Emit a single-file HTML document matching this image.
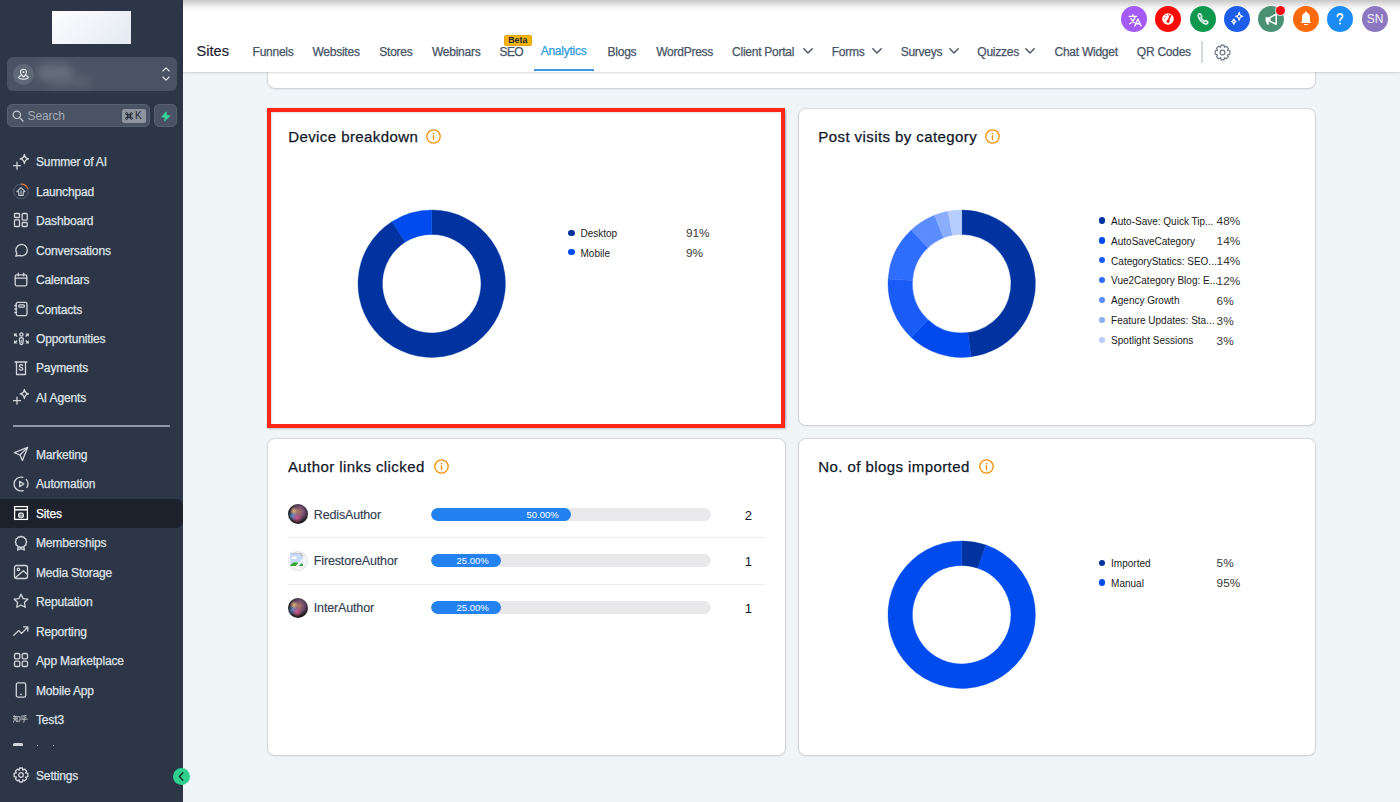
<!DOCTYPE html>
<html><head><meta charset="utf-8">
<style>
*{box-sizing:border-box;margin:0;padding:0}
html,body{width:1400px;height:802px;overflow:hidden;background:#f0f5f8;font-family:"Liberation Sans",sans-serif;position:relative}
.abs{position:absolute}
svg{display:block}
#sb{left:0;top:0;width:183px;height:802px;background:#2d3647}
.logo{left:52px;top:11px;width:79px;height:33px;background:linear-gradient(135deg,#fdfdff 0%,#eef1f7 60%,#e3e8f1 100%)}
.loc{left:7px;top:57px;width:170px;height:34px;border-radius:6px;background:#4a5363}
.loc .av{left:6px;top:7px;width:21px;height:21px;border-radius:50%;background:#5f6876}
.srch{left:6.5px;top:104px;width:143px;height:23px;border-radius:5px;background:#4a5363;border:1px solid #576070}
.srch span{position:absolute;left:20px;top:4px;font-size:12px;color:#a3aab6;letter-spacing:-0.1px}
.kbd{left:114px;top:4px;width:24px;height:14px;border-radius:2.5px;background:#8e95a1;color:#232a36;font-size:10px;line-height:14px;text-align:center;letter-spacing:0.5px}
.bolt{left:154px;top:104px;width:23px;height:23px;border-radius:5px;background:#4a5363;border:1px solid #576070}
.nav{left:0;width:183px;height:29px}
.nav .t{position:absolute;left:36px;top:8.3px;font-size:12px;color:#dfe2e7;letter-spacing:-0.15px;white-space:nowrap;-webkit-text-stroke:0.25px #dfe2e7}
.nav svg{position:absolute;left:13px;top:6px}
.nav.act{background:#1c212c;border-radius:0 7px 7px 0}
.nav.act .t{color:#fff;-webkit-text-stroke:0.25px #fff}
.sep{left:13px;top:425px;width:157px;height:2px;background:#8e96a3}
.collapse{left:173px;top:768px;width:17px;height:17px;border-radius:50%;background:#2fcf8e}
/* header */
#hd{z-index:5;left:183px;top:0;width:1217px;height:72px;background:#fff;box-shadow:0 1px 3px rgba(0,0,0,.09),0 1px 1px rgba(0,0,0,.06)}
#hd .shade{left:0;top:0;width:1217px;height:12px;background:linear-gradient(#c9c9c9 0px,#d3d3d3 2px,#e4e4e4 4.5px,#f3f3f3 7.5px,#fcfcfc 10px,#fff 12px)}
.htitle{left:13.5px;top:43.4px;font-size:14.6px;color:#1b2230;white-space:nowrap;-webkit-text-stroke:0.2px #1b2230}
.ni{top:45.3px;font-size:12px;color:#475467;letter-spacing:-0.25px;white-space:nowrap;-webkit-text-stroke:0.25px #475467}
.ni.on{color:#2d9cdb;-webkit-text-stroke:0.25px #2d9cdb;top:44.2px}
.uline{left:351.3px;top:68.6px;width:60px;height:2px;background:#3a9be0}
.beta{left:320.5px;top:35px;width:28.5px;height:11px;border-radius:3px;background:#f6b40e;box-shadow:inset 0 0 0 0.6px #d99a00;font-size:8.8px;line-height:11.5px;text-align:center;color:#1d2735;font-weight:700}
.chev{top:48px}
.vdiv{left:1018px;top:41px;width:2px;height:22px;background:#d6d9de}
.ci{top:5.5px;width:26px;height:26px;border-radius:50%}
/* cards */
.card{background:#fff;border-radius:7px;box-shadow:0 0 0 1px rgba(16,24,40,.05),0 0 2px 1px rgba(16,24,40,.06),0 1px 3px rgba(16,24,40,.08)}
.ct{position:absolute;left:20.5px;top:19px;font-size:16px;color:#101828;white-space:nowrap}
.info{position:absolute;top:20px}
.leg{position:absolute;font-size:11px;color:#101828;white-space:nowrap}
.leg i{position:absolute;left:-14px;top:3.5px;width:7px;height:7px;border-radius:50%}
.pct{position:absolute;font-size:12px;color:#333;white-space:nowrap}
.zh{position:absolute;left:13px;top:9.5px;font-size:8px;color:#c8ccd3;letter-spacing:-0.5px}
.ctitle{font-size:15px;color:#101828;white-space:nowrap;letter-spacing:0.42px;-webkit-text-stroke:0.25px #101828}
.ldot{width:6.4px;height:6.4px;border-radius:50%}
.ltxt{font-size:10px;color:#1a1a1a;white-space:nowrap}
.lpct{font-size:11.8px;color:#383838;white-space:nowrap}
.avatar{width:20px;height:20px;border-radius:50%;background:radial-gradient(circle at 30% 35%,rgba(240,190,120,.9) 0,rgba(240,190,120,0) 22%),radial-gradient(circle at 45% 70%,rgba(220,90,140,.9) 0,rgba(220,90,140,0) 30%),radial-gradient(circle at 25% 60%,rgba(90,150,220,.9) 0,rgba(90,150,220,0) 28%),radial-gradient(circle at 55% 40%,#b07a6a 0,#6a4a6a 35%,#1a1a1a 62%)}
.avb{width:20px;height:20px;border-radius:50%;background:#f4f5f7;box-shadow:inset 0 0 0 1px #e2e4e8}
.aname{font-size:12.5px;color:#344054;white-space:nowrap;letter-spacing:-0.15px;-webkit-text-stroke:0.15px #344054}
.track{width:279.8px;height:13px;border-radius:7px;background:#e9e9eb;overflow:hidden}
.fill{height:13px;border-radius:7px;background:#2382f0;position:relative}
.fill span{position:absolute;right:12px;top:1px;font-size:9.5px;color:#fff;white-space:nowrap;line-height:11px}
.acnt{width:52px;text-align:right;font-size:13px;color:#101828}
.adiv{left:288px;width:476.6px;height:1px;background:#eaecf0}
.red{left:267px;top:108px;width:518px;height:320px;border:4px solid #fe2718;box-shadow:1px 1px 2px rgba(0,0,0,.22),inset 1px 1px 2px rgba(0,0,0,.12)}
</style></head><body>
<div id="sb" class="abs">
  <div class="abs logo"></div>
  <div class="abs loc"><div class="abs av"><svg width="21" height="21" viewBox="0 0 21 21"><path d="M10.5 5.2A3 3 0 0 0 7.5 8.2C7.5 10.2 10.5 13 10.5 13S13.5 10.2 13.5 8.2A3 3 0 0 0 10.5 5.2Z" fill="none" stroke="#eef0f3" stroke-width="1.1"/><circle cx="10.5" cy="8.2" r="0.9" fill="#eef0f3"/><path d="M8.2 11.6C6.6 12 5.7 12.6 5.7 13.3C5.7 14.4 7.8 15.2 10.5 15.2S15.3 14.4 15.3 13.3C15.3 12.6 14.4 12 12.8 11.6" fill="none" stroke="#eef0f3" stroke-width="1.1"/></svg></div>
   <div class="abs" style="left:30px;top:8px;width:36px;height:15px;border-radius:8px;background:#727984;filter:blur(5px);opacity:.8"></div>
   <div class="abs" style="left:40px;top:18px;width:46px;height:12px;border-radius:6px;background:#636b77;filter:blur(5px);opacity:.6"></div>
   <svg class="abs" style="left:153.5px;top:9px" width="10" height="16" viewBox="0 0 10 16"><path d="M1.8 5L5 1.8L8.2 5M1.8 11L5 14.2L8.2 11" fill="none" stroke="#e5e7eb" stroke-width="1.1" stroke-linecap="round" stroke-linejoin="round"/></svg></div>
  <div class="abs srch"><svg class="abs" style="left:3.5px;top:4px" width="14" height="14" viewBox="0 0 14 14"><circle cx="5.8" cy="5.8" r="3.7" fill="none" stroke="#c4c9d1" stroke-width="1.2"/><path d="M8.6 8.6L12 12" stroke="#c4c9d1" stroke-width="1.3" stroke-linecap="round"/></svg><span>Search</span><div class="abs kbd"><svg class="abs" style="left:3px;top:3.2px" width="8" height="8" viewBox="0 0 8 8"><path fill="none" stroke="#232a36" stroke-width="1" d="M2.7 2.7H5.3V5.3H2.7ZM2.7 2.7V1.9A1.05 1.05 0 1 0 1.9 2.7H6.1A1.05 1.05 0 1 0 5.3 1.9V6.1A1.05 1.05 0 1 0 6.1 5.3H1.9A1.05 1.05 0 1 0 2.7 6.1Z"/></svg><span style="position:absolute;left:13.5px;top:0;font-size:10px;line-height:14px;color:#232a36">K</span></div></div>
  <div class="abs bolt"><svg class="abs" style="left:4.5px;top:4.5px" width="13" height="13" viewBox="0 0 13 13"><path d="M6.1 1.8L1.8 7.1H5.4L4.6 10.9L10 5.6H6.5Z" fill="#36d59a" stroke="#36d59a" stroke-width="0.9" stroke-linejoin="round"/></svg></div>
<div class="abs nav" style="top:147.10px"><svg width="16" height="16" viewBox="0 0 16 16" style="top:6.5px"><path fill="none" stroke="#d2d6dc" stroke-width="1.3" stroke-linecap="round" stroke-linejoin="round" d="M11.4 0.3Q11.9 4.3 15.6 4.9Q11.9 5.5 11.4 9.5Q10.9 5.5 7.2 4.9Q10.9 4.3 11.4 0.3Z"/><path fill="none" stroke="#d2d6dc" stroke-width="1.3" stroke-linecap="round" stroke-linejoin="round" d="M4 8.2V15.2M0.5 11.7H7.5"/></svg><span class="t">Summer of AI</span></div>
<div class="abs nav" style="top:176.54px"><svg width="16" height="16" viewBox="0 0 16 16" style="top:6.5px"><g transform="translate(0 0.4)"><circle cx="8" cy="8" r="7.3" fill="none" stroke="#566071" stroke-width="1"/><path d="M8 0.7A7.3 7.3 0 0 1 14.95 5.75" fill="none" stroke="#d9793a" stroke-width="1.2"/><path fill="none" stroke="#c9cdd4" stroke-width="1.1" stroke-linejoin="round" d="M8 4.3L12 8.3H10.2V12.1H5.8V8.3H4Z"/><path d="M8 6.8V12.1" stroke="#c9cdd4" stroke-width="0.9"/></g></svg><span class="t">Launchpad</span></div>
<div class="abs nav" style="top:205.98px"><svg width="16" height="16" viewBox="0 0 16 16" style="top:6.5px"><rect fill="none" stroke="#d2d6dc" stroke-width="1.3" stroke-linecap="round" stroke-linejoin="round" x="1.5" y="1.5" width="5" height="4" rx="0.8"/><rect fill="none" stroke="#d2d6dc" stroke-width="1.3" stroke-linecap="round" stroke-linejoin="round" x="1.5" y="7.8" width="5" height="6.7" rx="0.8"/><rect fill="none" stroke="#d2d6dc" stroke-width="1.3" stroke-linecap="round" stroke-linejoin="round" x="9.2" y="1.5" width="5" height="6.7" rx="0.8"/><rect fill="none" stroke="#d2d6dc" stroke-width="1.3" stroke-linecap="round" stroke-linejoin="round" x="9.2" y="10.5" width="5" height="4" rx="0.8"/></svg><span class="t">Dashboard</span></div>
<div class="abs nav" style="top:235.42px"><svg width="16" height="16" viewBox="0 0 16 16" style="top:6.5px"><path fill="none" stroke="#d2d6dc" stroke-width="1.3" stroke-linecap="round" stroke-linejoin="round" d="M2.8 14.2L3.8 11.2A5.7 5.7 0 1 1 6.4 13.4Z"/></svg><span class="t">Conversations</span></div>
<div class="abs nav" style="top:264.86px"><svg width="16" height="16" viewBox="0 0 16 16" style="top:6.5px"><rect fill="none" stroke="#d2d6dc" stroke-width="1.3" stroke-linecap="round" stroke-linejoin="round" x="2.2" y="3.8" width="11.6" height="11" rx="1.5"/><path fill="none" stroke="#d2d6dc" stroke-width="1.3" stroke-linecap="round" stroke-linejoin="round" d="M2.2 7.2H13.8M5.3 2.2V4.8M10.7 2.2V4.8"/></svg><span class="t">Calendars</span></div>
<div class="abs nav" style="top:294.30px"><svg width="16" height="16" viewBox="0 0 16 16" style="top:6.5px"><rect fill="none" stroke="#d2d6dc" stroke-width="1.3" stroke-linecap="round" stroke-linejoin="round" x="3.2" y="1.4" width="10.8" height="13.2" rx="1.5"/><rect fill="none" stroke="#d2d6dc" stroke-width="1.3" stroke-linecap="round" stroke-linejoin="round" x="5.8" y="3.8" width="5.6" height="2.4" rx="1"/><path fill="none" stroke="#d2d6dc" stroke-width="1.3" stroke-linecap="round" stroke-linejoin="round" d="M1.8 4.5H3.5M1.8 8H3.5M1.8 11.5H3.5"/></svg><span class="t">Contacts</span></div>
<div class="abs nav" style="top:323.74px"><svg width="16" height="16" viewBox="0 0 16 16" style="top:6.5px"><circle fill="none" stroke="#d2d6dc" stroke-width="1.3" stroke-linecap="round" stroke-linejoin="round" cx="8.4" cy="4.5" r="1.6"/><path fill="none" stroke="#d2d6dc" stroke-width="1.3" stroke-linecap="round" stroke-linejoin="round" stroke-width="1.2" d="M6.4 9.4Q6.4 7.6 8.4 7.6Q10.4 7.6 10.4 9.4L9.7 13.6Q9.5 14.5 8.4 14.5Q7.3 14.5 7.1 13.6Z"/><path d="M8.4 9.6V13" stroke="#d2d6dc" stroke-width="0.8"/><path fill="#d2d6dc" d="M0.8 3.6H4.4L3.3 4.7L4.6 6L3.6 7L2.3 5.7L1.2 6.8ZM16 3.6H12.4L13.5 4.7L12.2 6L13.2 7L14.5 5.7L15.6 6.8ZM0.8 13.4H4.4L3.3 12.3L4.6 11L3.6 10L2.3 11.3L1.2 10.2ZM16 13.4H12.4L13.5 12.3L12.2 11L13.2 10L14.5 11.3L15.6 10.2Z"/></svg><span class="t">Opportunities</span></div>
<div class="abs nav" style="top:353.18px"><svg width="16" height="16" viewBox="0 0 16 16" style="top:6.5px"><path fill="none" stroke="#d2d6dc" stroke-width="1.3" stroke-linecap="round" stroke-linejoin="round" d="M2 2H14M3.5 2V14.5H12.5V2"/><path fill="none" stroke="#d2d6dc" stroke-width="1.3" stroke-linecap="round" stroke-linejoin="round" stroke-width="1.1" d="M9.6 5.6Q9.2 4.6 8 4.6Q6.4 4.6 6.4 5.9Q6.4 7 8 7.3Q9.8 7.6 9.8 8.9Q9.8 10.2 8 10.2Q6.7 10.2 6.3 9.2"/></svg><span class="t">Payments</span></div>
<div class="abs nav" style="top:382.62px"><svg width="16" height="16" viewBox="0 0 16 16" style="top:6.5px"><path fill="none" stroke="#d2d6dc" stroke-width="1.3" stroke-linecap="round" stroke-linejoin="round" d="M11.4 0.3Q11.9 4.3 15.6 4.9Q11.9 5.5 11.4 9.5Q10.9 5.5 7.2 4.9Q10.9 4.3 11.4 0.3Z"/><path fill="none" stroke="#d2d6dc" stroke-width="1.3" stroke-linecap="round" stroke-linejoin="round" d="M4 8.2V15.2M0.5 11.7H7.5"/></svg><span class="t">AI Agents</span></div>
<div class="abs sep"></div>
<div class="abs nav" style="top:439.70px"><svg width="16" height="16" viewBox="0 0 16 16" style="top:6.5px"><path fill="none" stroke="#d2d6dc" stroke-width="1.3" stroke-linecap="round" stroke-linejoin="round" d="M14.6 1.4L1.4 6.6L7 9L9.4 14.6Z"/><path fill="none" stroke="#d2d6dc" stroke-width="1.3" stroke-linecap="round" stroke-linejoin="round" d="M14.6 1.4L7 9"/></svg><span class="t">Marketing</span></div>
<div class="abs nav" style="top:469.14px"><svg width="16" height="16" viewBox="0 0 16 16" style="top:6.5px"><path fill="none" stroke="#d2d6dc" stroke-width="1.3" stroke-linecap="round" stroke-linejoin="round" d="M9.79 1.34A6.9 6.9 0 1 0 10.13 14.56"/><path fill="none" stroke="#d2d6dc" stroke-width="1.3" stroke-linecap="round" stroke-linejoin="round" d="M13.13 3.38A6.9 6.9 0 0 1 13.98 11.45"/><path fill="none" stroke="#d2d6dc" stroke-width="1.3" stroke-linecap="round" stroke-linejoin="round" d="M6.6 5.4L10.9 8L6.6 10.6Z"/></svg><span class="t">Automation</span></div>
<div class="abs nav act" style="top:498.58px"><svg width="16" height="16" viewBox="0 0 16 16" style="top:6.5px"><rect x="1.6" y="1.6" width="12.8" height="12.8" fill="none" stroke="#fff" stroke-width="1.3"/><path d="M1.6 4.8H14.4" stroke="#fff" stroke-width="1.5"/><circle cx="8" cy="10.2" r="3" fill="#f0f0f0"/><path d="M6.2 9.6H9.8M6.2 10.9H9.8M8 7.4V13" stroke="#1c212c" stroke-width="0.5"/></svg><span class="t">Sites</span></div>
<div class="abs nav" style="top:528.02px"><svg width="16" height="16" viewBox="0 0 16 16" style="top:6.5px"><path fill="none" stroke="#d2d6dc" stroke-width="1.3" stroke-linecap="round" stroke-linejoin="round" d="M8 1.2L9.3 2.1L10.9 1.9L11.6 3.4L13.1 4.1L12.9 5.7L13.8 7L12.9 8.3L13.1 9.9L11.6 10.6L10.9 12.1L9.3 11.9L8 12.8L6.7 11.9L5.1 12.1L4.4 10.6L2.9 9.9L3.1 8.3L2.2 7L3.1 5.7L2.9 4.1L4.4 3.4L5.1 1.9L6.7 2.1Z"/><path fill="none" stroke="#d2d6dc" stroke-width="1.3" stroke-linecap="round" stroke-linejoin="round" d="M5.2 12L4.6 15L8 13.6L11.4 15L10.8 12"/></svg><span class="t">Memberships</span></div>
<div class="abs nav" style="top:557.46px"><svg width="16" height="16" viewBox="0 0 16 16" style="top:6.5px"><rect fill="none" stroke="#d2d6dc" stroke-width="1.3" stroke-linecap="round" stroke-linejoin="round" x="1.5" y="1.5" width="13" height="13" rx="2"/><circle fill="none" stroke="#d2d6dc" stroke-width="1.3" stroke-linecap="round" stroke-linejoin="round" cx="5.4" cy="5.4" r="1.2"/><path fill="none" stroke="#d2d6dc" stroke-width="1.3" stroke-linecap="round" stroke-linejoin="round" d="M2 14L10.5 6.8L14.5 10.6"/></svg><span class="t">Media Storage</span></div>
<div class="abs nav" style="top:586.90px"><svg width="16" height="16" viewBox="0 0 16 16" style="top:6.5px"><path fill="none" stroke="#d2d6dc" stroke-width="1.3" stroke-linecap="round" stroke-linejoin="round" d="M8 1.2L10.1 5.6L14.8 6.2L11.4 9.5L12.2 14.3L8 12L3.8 14.3L4.6 9.5L1.2 6.2L5.9 5.6Z"/></svg><span class="t">Reputation</span></div>
<div class="abs nav" style="top:616.34px"><svg width="16" height="16" viewBox="0 0 16 16" style="top:6.5px"><path fill="none" stroke="#d2d6dc" stroke-width="1.3" stroke-linecap="round" stroke-linejoin="round" d="M0.8 12.2L5.6 7.6L8.6 10.4L14.6 4.2M10.6 3.8H14.8V8"/></svg><span class="t">Reporting</span></div>
<div class="abs nav" style="top:645.78px"><svg width="16" height="16" viewBox="0 0 16 16" style="top:6.5px"><rect fill="none" stroke="#d2d6dc" stroke-width="1.3" stroke-linecap="round" stroke-linejoin="round" x="1.5" y="1.5" width="5.3" height="5.3" rx="1.3"/><rect fill="none" stroke="#d2d6dc" stroke-width="1.3" stroke-linecap="round" stroke-linejoin="round" x="9.2" y="1.5" width="5.3" height="5.3" rx="1.3"/><rect fill="none" stroke="#d2d6dc" stroke-width="1.3" stroke-linecap="round" stroke-linejoin="round" x="1.5" y="9.2" width="5.3" height="5.3" rx="1.3"/><rect fill="none" stroke="#d2d6dc" stroke-width="1.3" stroke-linecap="round" stroke-linejoin="round" x="9.2" y="9.2" width="5.3" height="5.3" rx="1.3"/></svg><span class="t">App Marketplace</span></div>
<div class="abs nav" style="top:675.22px"><svg width="16" height="16" viewBox="0 0 16 16" style="top:6.5px"><rect fill="none" stroke="#d2d6dc" stroke-width="1.3" stroke-linecap="round" stroke-linejoin="round" x="3.3" y="0.9" width="9.4" height="14.2" rx="1.6"/><circle cx="8" cy="12.4" r="0.8" fill="#d2d6dc"/></svg><span class="t">Mobile App</span></div>
<div class="abs nav" style="top:704.66px"><svg style="position:absolute;left:13px;top:10.8px" width="15" height="8" viewBox="0 0 15 8"><path fill="none" stroke="#c8ccd3" stroke-width="0.85" stroke-linecap="round" d="M1.3 0.4L0.5 1.8M0.9 1.5H3.6M0.3 3.7H3.8M2.1 1.5V3.7L0.4 7.2M2.3 4.5L3.8 6.9M4.5 1.7H6.9V6.2H4.5Z M13.4 0.4Q11 1.1 8.5 1.1M8.6 2L9.2 3.1M12.9 2L12.3 3.1M7.9 4.2H14.3M11.1 1.3V6.7Q11.1 7.5 10.1 7.1"/></svg><span class="t">Test3</span></div>
<div class="abs" style="left:0;top:742px;width:183px;height:4.5px;overflow:hidden"><div class="abs" style="left:13px;top:1.3px;width:10px;height:3px;border-radius:1.5px 1.5px 0 0;background:#d2d6dc"></div><div class="abs" style="left:37px;top:3px;width:1.2px;height:1.2px;background:#aab"></div><div class="abs" style="left:53px;top:3px;width:1.2px;height:1.2px;background:#aab"></div></div>
<div class="abs nav" style="top:760.90px"><svg width="16" height="16" viewBox="0 0 16 16" style="top:6.5px"><path fill="none" stroke="#d2d6dc" stroke-width="1.3" stroke-linecap="round" stroke-linejoin="round" d="M6.6 1H9.4L9.8 3.1L11.6 2.1L13.6 4.1L12.6 5.9L14.9 6.4V9.6L12.6 10.1L13.6 11.9L11.6 13.9L9.8 12.9L9.4 15H6.6L6.2 12.9L4.4 13.9L2.4 11.9L3.4 10.1L1.1 9.6V6.4L3.4 5.9L2.4 4.1L4.4 2.1L6.2 3.1Z"/><circle fill="none" stroke="#d2d6dc" stroke-width="1.3" stroke-linecap="round" stroke-linejoin="round" cx="8" cy="8" r="2.3"/></svg><span class="t">Settings</span></div>
<div class="abs collapse"><svg width="17" height="17" viewBox="0 0 17 17"><path d="M9.8 4.8L6.4 8.5L9.8 12.2" fill="none" stroke="#17372a" stroke-width="1.5" stroke-linecap="round"/></svg></div>
</div>
<div id="hd" class="abs">
  <div class="abs shade"></div>
  <div class="abs htitle">Sites</div>
<div class="abs ni" style="left:69.60px;letter-spacing:-0.250px">Funnels</div>
<div class="abs ni" style="left:129.50px;letter-spacing:-0.250px">Websites</div>
<div class="abs ni" style="left:196.30px;letter-spacing:-0.250px">Stores</div>
<div class="abs ni" style="left:249.00px;letter-spacing:-0.250px">Webinars</div>
<div class="abs ni" style="left:316.60px;letter-spacing:-0.700px">SEO</div>
<div class="abs ni on" style="left:357.70px;letter-spacing:-0.250px">Analytics</div>
<div class="abs ni" style="left:424.60px;letter-spacing:-0.250px">Blogs</div>
<div class="abs ni" style="left:473.20px;letter-spacing:-0.250px">WordPress</div>
<div class="abs ni" style="left:549.10px;letter-spacing:-0.250px">Client Portal</div>
<div class="abs ni" style="left:648.70px;letter-spacing:-0.250px">Forms</div>
<div class="abs ni" style="left:717.70px;letter-spacing:-0.250px">Surveys</div>
<div class="abs ni" style="left:794.30px;letter-spacing:-0.250px">Quizzes</div>
<div class="abs ni" style="left:871.50px;letter-spacing:-0.250px">Chat Widget</div>
<div class="abs ni" style="left:953.80px;letter-spacing:-0.250px">QR Codes</div>
<div class="abs uline"></div><div class="abs beta">Beta</div>
<div class="abs chev" style="left:620.0px"><svg width="10" height="6" viewBox="0 0 10 6"><path d="M0.8 0.8L5 5L9.2 0.8" fill="none" stroke="#475467" stroke-width="1.4" stroke-linecap="round" stroke-linejoin="round"/></svg></div>
<div class="abs chev" style="left:688.5px"><svg width="10" height="6" viewBox="0 0 10 6"><path d="M0.8 0.8L5 5L9.2 0.8" fill="none" stroke="#475467" stroke-width="1.4" stroke-linecap="round" stroke-linejoin="round"/></svg></div>
<div class="abs chev" style="left:765.5px"><svg width="10" height="6" viewBox="0 0 10 6"><path d="M0.8 0.8L5 5L9.2 0.8" fill="none" stroke="#475467" stroke-width="1.4" stroke-linecap="round" stroke-linejoin="round"/></svg></div>
<div class="abs chev" style="left:842.0px"><svg width="10" height="6" viewBox="0 0 10 6"><path d="M0.8 0.8L5 5L9.2 0.8" fill="none" stroke="#475467" stroke-width="1.4" stroke-linecap="round" stroke-linejoin="round"/></svg></div>
<div class="abs vdiv"></div>
<svg class="abs" style="left:1031px;top:44px" width="17" height="17" viewBox="0 0 16 16"><path fill="none" stroke="#6b7280" stroke-width="1.1" stroke-linejoin="round" d="M6.6 1H9.4L9.8 3.1L11.6 2.1L13.6 4.1L12.6 5.9L14.9 6.4V9.6L12.6 10.1L13.6 11.9L11.6 13.9L9.8 12.9L9.4 15H6.6L6.2 12.9L4.4 13.9L2.4 11.9L3.4 10.1L1.1 9.6V6.4L3.4 5.9L2.4 4.1L4.4 2.1L6.2 3.1Z"/><circle cx="8" cy="8" r="2.3" fill="none" stroke="#6b7280" stroke-width="1.1"/></svg>
<svg class="abs" style="left:937.9px;top:5.7px" width="26" height="26" viewBox="0 0 26 26"><circle cx="13" cy="13" r="13" fill="#a45bf5"/><path d="M8.2 10.4H15.6M11.9 8.6V10.4M14.3 10.4Q13 15.2 8.8 17.8M10 12.6Q11.6 15.4 13.6 16.6M13.8 20L16.9 12.9L20 20M14.8 17.7H19" fill="none" stroke="#fff" stroke-width="1.35" stroke-linecap="round" stroke-linejoin="round"/></svg>
<svg class="abs" style="left:972.1px;top:5.7px" width="26" height="26" viewBox="0 0 26 26"><circle cx="13" cy="13" r="13" fill="#fb0a0a"/><circle cx="13" cy="13" r="5.8" fill="#fff"/><path d="M13 15.5L15.4 9.6" stroke="#fb0a0a" stroke-width="1.6" stroke-linecap="round"/><circle cx="13" cy="15.2" r="1.5" fill="#fb0a0a"/><circle cx="9.8" cy="12.2" r="0.6" fill="#fb0a0a"/><circle cx="11" cy="9.6" r="0.6" fill="#fb0a0a"/><circle cx="13.6" cy="8.8" r="0.6" fill="#fb0a0a"/></svg>
<svg class="abs" style="left:1006.6px;top:5.7px" width="26" height="26" viewBox="0 0 26 26"><circle cx="13" cy="13" r="13" fill="#10984f"/><path fill="none" stroke="#fff" stroke-width="1.4" stroke-linecap="round" stroke-linejoin="round" stroke-width="1.3" d="M9.2 7.6Q8 8.2 8.3 10Q9.5 15 15 17.8Q16.8 18.4 17.8 17L17.8 15.8L15.9 14.6L14.6 15.5Q12 14 10.9 11.4L11.8 10.3L10.6 8Z"/></svg>
<svg class="abs" style="left:1040.9px;top:5.7px" width="26" height="26" viewBox="0 0 26 26"><circle cx="13" cy="13" r="13" fill="#1c5de9"/><path fill="none" stroke="#fff" stroke-width="1.3" stroke-linejoin="round" d="M15.2 6.5Q15.6 10 18.6 10.4Q15.6 10.8 15.2 14.3Q14.8 10.8 11.8 10.4Q14.8 10 15.2 6.5Z"/><path fill="none" stroke="#fff" stroke-width="1.3" stroke-linejoin="round" d="M9.8 13.2Q10.1 15.4 12 15.7Q10.1 16 9.8 18.2Q9.5 16 7.6 15.7Q9.5 15.4 9.8 13.2Z"/></svg>
<svg class="abs" style="left:1075.2px;top:5.7px" width="26" height="26" viewBox="0 0 26 26"><circle cx="13" cy="13" r="13" fill="#4a9174"/><path d="M7.6 11.2H11.8V15.6H10.4L11 18.6H8.8L8.2 15.6H7.6Z" fill="#fff"/><path d="M11.8 11.6L18.2 8.2V18.2L11.8 15.2Z" fill="none" stroke="#fff" stroke-width="1.5" stroke-linejoin="round"/></svg>
<svg class="abs" style="left:1109.7px;top:5.7px" width="26" height="26" viewBox="0 0 26 26"><circle cx="13" cy="13" r="13" fill="#fd6a0c"/><path d="M13 6.5Q9 6.8 9 11.5V15.2L7.8 17H18.2L17 15.2V11.5Q17 6.8 13 6.5Z" fill="#fff"/><circle cx="13" cy="6.6" r="1" fill="#fff"/><path d="M11.6 18.5H14.4" stroke="#fff" stroke-width="1.2" stroke-linecap="round"/></svg>
<svg class="abs" style="left:1144.0px;top:5.7px" width="26" height="26" viewBox="0 0 26 26"><circle cx="13" cy="13" r="13" fill="#1b8cf6"/><path d="M10.4 10.6Q10.4 7.9 13 7.9Q15.6 7.9 15.6 10.3Q15.6 11.7 14.2 12.5Q13 13.2 13 14.6" fill="none" stroke="#fff" stroke-width="1.6" stroke-linecap="round"/><circle cx="13" cy="17.6" r="1" fill="#fff"/></svg>
<svg class="abs" style="left:1178.5px;top:5.7px" width="26" height="26" viewBox="0 0 26 26"><circle cx="13" cy="13" r="13" fill="#8c78c1"/><text x="13" y="17.4" text-anchor="middle" font-family="Liberation Sans" font-size="12" fill="#f4f2fa" letter-spacing="-0.2">SN</text></svg>
<div class="abs" style="left:1092.9px;top:5.5px;width:9px;height:9px;border-radius:50%;background:#f80a12;box-shadow:0 0 0 1px rgba(255,255,255,.7)"></div>
</div>
<div class="abs card" style="left:268px;top:40px;width:1047.2px;height:48px"></div>
<div class="abs card" style="left:268px;top:109px;width:516.6px;height:316px"></div>
<div class="abs card" style="left:798.6px;top:109px;width:516.6px;height:316px"></div>
<div class="abs card" style="left:268px;top:439px;width:516.6px;height:316px"></div>
<div class="abs card" style="left:798.6px;top:439px;width:516.6px;height:316px"></div>
<div class="abs ctitle" style="left:288.20px;top:127.60px">Device breakdown</div><svg class="abs" style="left:425.70px;top:129.00px" width="15" height="15" viewBox="0 0 15 15"><circle cx="7.5" cy="7.5" r="6.7" fill="none" stroke="#f79009" stroke-width="1.3"/><path d="M7.5 6.8V10.6" stroke="#f79009" stroke-width="1.4" stroke-linecap="round"/><circle cx="7.5" cy="4.6" r="0.8" fill="#f79009"/></svg>
<svg class="abs" style="left:356.50px;top:209.30px" width="149.4" height="149.4" viewBox="-74.7 -74.7 149.4 149.4"><path d="M0.000 -73.700A73.7 73.7 0 1 1 -39.490 -62.227L-26.416 -41.625A49.3 49.3 0 1 0 0.000 -49.300Z" fill="#0033a0" stroke="#0033a0" stroke-width="0.4"/><path d="M-39.490 -62.227A73.7 73.7 0 0 1 0.000 -73.700L0.000 -49.300A49.3 49.3 0 0 0 -26.416 -41.625Z" fill="#004bed" stroke="#004bed" stroke-width="0.4"/></svg>
<div class="abs ldot" style="left:568.30px;top:229.50px;background:#0033a0"></div><div class="abs ltxt" style="left:580.50px;top:227.95px">Desktop</div><div class="abs lpct" style="left:686.00px;top:226.40px">91%</div><div class="abs ldot" style="left:568.30px;top:249.10px;background:#004bed"></div><div class="abs ltxt" style="left:580.50px;top:247.55px">Mobile</div><div class="abs lpct" style="left:686.00px;top:246.00px">9%</div>
<div class="abs ctitle" style="left:818.30px;top:127.60px">Post visits by category</div><svg class="abs" style="left:985.30px;top:129.00px" width="15" height="15" viewBox="0 0 15 15"><circle cx="7.5" cy="7.5" r="6.7" fill="none" stroke="#f79009" stroke-width="1.3"/><path d="M7.5 6.8V10.6" stroke="#f79009" stroke-width="1.4" stroke-linecap="round"/><circle cx="7.5" cy="4.6" r="0.8" fill="#f79009"/></svg>
<svg class="abs" style="left:887.00px;top:209.30px" width="149.4" height="149.4" viewBox="-74.7 -74.7 149.4 149.4"><path d="M0.000 -73.700A73.7 73.7 0 0 1 9.237 73.119L6.179 48.911A49.3 49.3 0 0 0 0.000 -49.300Z" fill="#0033a0" stroke="#0033a0" stroke-width="0.4"/><path d="M9.237 73.119A73.7 73.7 0 0 1 -50.451 53.725L-33.748 35.938A49.3 49.3 0 0 0 6.179 48.911Z" fill="#0049ee" stroke="#0049ee" stroke-width="0.4"/><path d="M-50.451 53.725A73.7 73.7 0 0 1 -73.555 -4.628L-49.203 -3.096A49.3 49.3 0 0 0 -33.748 35.938Z" fill="#195bf6" stroke="#195bf6" stroke-width="0.4"/><path d="M-73.555 -4.628A73.7 73.7 0 0 1 -50.451 -53.725L-33.748 -35.938A49.3 49.3 0 0 0 -49.203 -3.096Z" fill="#2f6dfe" stroke="#2f6dfe" stroke-width="0.4"/><path d="M-50.451 -53.725A73.7 73.7 0 0 1 -27.131 -68.525L-18.149 -45.838A49.3 49.3 0 0 0 -33.748 -35.938Z" fill="#5b8cfd" stroke="#5b8cfd" stroke-width="0.4"/><path d="M-27.131 -68.525A73.7 73.7 0 0 1 -13.810 -72.395L-9.238 -48.427A49.3 49.3 0 0 0 -18.149 -45.838Z" fill="#8aaefc" stroke="#8aaefc" stroke-width="0.4"/><path d="M-13.810 -72.395A73.7 73.7 0 0 1 -0.000 -73.700L-0.000 -49.300A49.3 49.3 0 0 0 -9.238 -48.427Z" fill="#b6cdfd" stroke="#b6cdfd" stroke-width="0.4"/></svg>
<div class="abs ldot" style="left:1098.90px;top:217.30px;background:#0033a0"></div><div class="abs ltxt" style="left:1111.10px;top:215.75px">Auto-Save: Quick Tip...</div><div class="abs lpct" style="left:1216.60px;top:214.20px">48%</div><div class="abs ldot" style="left:1098.90px;top:237.20px;background:#0049ee"></div><div class="abs ltxt" style="left:1111.10px;top:235.65px">AutoSaveCategory</div><div class="abs lpct" style="left:1216.60px;top:234.10px">14%</div><div class="abs ldot" style="left:1098.90px;top:257.10px;background:#195bf6"></div><div class="abs ltxt" style="left:1111.10px;top:255.55px">CategoryStatics: SEO...</div><div class="abs lpct" style="left:1216.60px;top:254.00px">14%</div><div class="abs ldot" style="left:1098.90px;top:277.00px;background:#2f6dfe"></div><div class="abs ltxt" style="left:1111.10px;top:275.45px">Vue2Category Blog: E...</div><div class="abs lpct" style="left:1216.60px;top:273.90px">12%</div><div class="abs ldot" style="left:1098.90px;top:296.90px;background:#5b8cfd"></div><div class="abs ltxt" style="left:1111.10px;top:295.35px">Agency Growth</div><div class="abs lpct" style="left:1216.60px;top:293.80px">6%</div><div class="abs ldot" style="left:1098.90px;top:316.80px;background:#8aaefc"></div><div class="abs ltxt" style="left:1111.10px;top:315.25px">Feature Updates: Sta...</div><div class="abs lpct" style="left:1216.60px;top:313.70px">3%</div><div class="abs ldot" style="left:1098.90px;top:336.70px;background:#b6cdfd"></div><div class="abs ltxt" style="left:1111.10px;top:335.15px">Spotlight Sessions</div><div class="abs lpct" style="left:1216.60px;top:333.60px">3%</div>
<div class="abs ctitle" style="left:287.90px;top:457.60px">Author links clicked</div><svg class="abs" style="left:433.50px;top:459.30px" width="15" height="15" viewBox="0 0 15 15"><circle cx="7.5" cy="7.5" r="6.7" fill="none" stroke="#f79009" stroke-width="1.3"/><path d="M7.5 6.8V10.6" stroke="#f79009" stroke-width="1.4" stroke-linecap="round"/><circle cx="7.5" cy="4.6" r="0.8" fill="#f79009"/></svg>
<div class="abs avatar" style="left:288px;top:504.40px"></div>
<div class="abs aname" style="left:313.80px;top:507.80px">RedisAuthor</div>
<div class="abs track" style="left:430.8px;top:507.80px"><div class="fill" style="width:139.9px"><span>50.00%</span></div></div>
<div class="abs acnt" style="left:700px;top:507.80px">2</div>
<div class="abs adiv" style="top:537px"></div>
<div class="abs avb" style="left:288px;top:551.00px"><svg width="20" height="20" viewBox="0 0 20 20"><path d="M2.2 2.4H13L15 4.6V14.9H2.2Z" fill="#c7dbf8"/><path d="M2.2 2.4H13" stroke="#9aa3ad" stroke-width="0.6"/><path d="M13 2.4V4.6H15Z" fill="#f4f4f4" stroke="#999" stroke-width="0.5"/><ellipse cx="6.2" cy="6.8" rx="2.6" ry="1.2" fill="#fff"/><path d="M2.2 14.9Q5 9.6 10.2 11.8L8.4 14.9Z" fill="#3aa52c"/><path d="M11.2 14.9L13.3 12.3L15 13.4V14.9Z" fill="#3aa52c"/><path d="M8.2 15.4L15.6 8.4" stroke="#fff" stroke-width="1.2"/></svg></div>
<div class="abs aname" style="left:313.80px;top:554.40px">FirestoreAuthor</div>
<div class="abs track" style="left:430.8px;top:554.40px"><div class="fill" style="width:70.0px"><span>25.00%</span></div></div>
<div class="abs acnt" style="left:700px;top:554.40px">1</div>
<div class="abs adiv" style="top:584px"></div>
<div class="abs avatar" style="left:288px;top:597.60px"></div>
<div class="abs aname" style="left:313.80px;top:601.00px">InterAuthor</div>
<div class="abs track" style="left:430.8px;top:601.00px"><div class="fill" style="width:70.0px"><span>25.00%</span></div></div>
<div class="abs acnt" style="left:700px;top:601.00px">1</div>
<div class="abs ctitle" style="left:818.30px;top:457.60px">No. of blogs imported</div><svg class="abs" style="left:978.50px;top:459.30px" width="15" height="15" viewBox="0 0 15 15"><circle cx="7.5" cy="7.5" r="6.7" fill="none" stroke="#f79009" stroke-width="1.3"/><path d="M7.5 6.8V10.6" stroke="#f79009" stroke-width="1.4" stroke-linecap="round"/><circle cx="7.5" cy="4.6" r="0.8" fill="#f79009"/></svg>
<svg class="abs" style="left:887.00px;top:539.50px" width="149.4" height="149.4" viewBox="-74.7 -74.7 149.4 149.4"><path d="M0.000 -73.700A73.7 73.7 0 0 1 24.310 -69.575L16.262 -46.541A49.3 49.3 0 0 0 0.000 -49.300Z" fill="#0033a0" stroke="#0033a0" stroke-width="0.4"/><path d="M24.310 -69.575A73.7 73.7 0 1 1 -0.000 -73.700L-0.000 -49.300A49.3 49.3 0 1 0 16.262 -46.541Z" fill="#004bed" stroke="#004bed" stroke-width="0.4"/></svg>
<div class="abs ldot" style="left:1098.90px;top:559.50px;background:#0033a0"></div><div class="abs ltxt" style="left:1111.10px;top:557.95px">Imported</div><div class="abs lpct" style="left:1216.60px;top:556.40px">5%</div><div class="abs ldot" style="left:1098.90px;top:579.40px;background:#004bed"></div><div class="abs ltxt" style="left:1111.10px;top:577.85px">Manual</div><div class="abs lpct" style="left:1216.60px;top:576.30px">95%</div>
<div class="abs red"></div>
</body></html>
